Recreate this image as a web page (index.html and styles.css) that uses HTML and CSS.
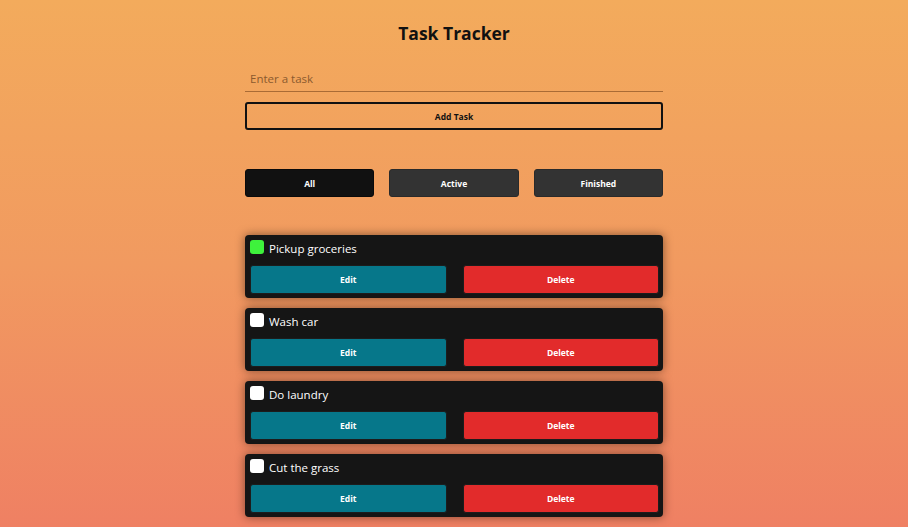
FILE: index.html
```html
<!DOCTYPE html>
<html>
<head>
<meta charset="utf-8">
<link rel="stylesheet" href="styles.css">
</head>
<body>
<main class="app">
  <h1 class="title">Task Tracker</h1>
  <input class="task-input" type="text" placeholder="Enter a task">
  <button class="add-btn">Add Task</button>
  <div class="filters">
    <button class="filter active-filter">All</button>
    <button class="filter">Active</button>
    <button class="filter">Finished</button>
  </div>
  <ul class="tasks">
    <li class="task">
      <div class="task-head"><span class="check done"></span><span class="task-name">Pickup groceries</span></div>
      <div class="task-actions"><button class="edit">Edit</button><button class="delete">Delete</button></div>
    </li>
    <li class="task">
      <div class="task-head"><span class="check"></span><span class="task-name">Wash car</span></div>
      <div class="task-actions"><button class="edit">Edit</button><button class="delete">Delete</button></div>
    </li>
    <li class="task">
      <div class="task-head"><span class="check"></span><span class="task-name">Do laundry</span></div>
      <div class="task-actions"><button class="edit">Edit</button><button class="delete">Delete</button></div>
    </li>
    <li class="task">
      <div class="task-head"><span class="check"></span><span class="task-name">Cut the grass</span></div>
      <div class="task-actions"><button class="edit">Edit</button><button class="delete">Delete</button></div>
    </li>
  </ul>
</main>
</body>
</html>
```
FILE: styles.css
```css
html, body {
  margin: 0;
  height: 100%;
}
body {
  background: linear-gradient(180deg, #f3ab5c 0%, #f19a60 50%, #ef8063 100%);
  font-family: "Open Sans", "Noto Sans", sans-serif;
  overflow: hidden;
}
.app {
  width: 418px;
  margin: 0 auto;
  padding-top: 20px;
  display: flex;
  flex-direction: column;
}
.title {
  margin: 0;
  font-size: 17.5px;
  line-height: 26px;
  font-weight: 700;
  text-align: center;
  color: #111;
}
.task-input {
  margin-top: 19px;
  height: 26px;
  padding: 0 5px;
  border: none;
  border-bottom: 1px solid rgba(110, 60, 20, 0.55);
  background: transparent;
  font-family: inherit;
  font-size: 11.5px;
  outline: none;
}
.task-input::placeholder {
  color: #8b5a2e;
}
.add-btn {
  margin-top: 10px;
  height: 28px;
  border: 2px solid #111;
  border-radius: 3px;
  background: transparent;
  font-family: inherit;
  font-size: 8.5px;
  font-weight: 700;
  color: #111;
}
.filters {
  margin-top: 39px;
  display: flex;
  gap: 15px;
}
.filter {
  flex: 1;
  height: 28px;
  border: 1px solid #2a2a2a;
  border-radius: 3px;
  background: #333;
  color: #fff;
  font-family: inherit;
  font-size: 8.5px;
  font-weight: 700;
}
.filter.active-filter {
  background: #111;
  border-color: #0a0a0a;
}
.tasks {
  list-style: none;
  margin: 38px 0 0;
  padding: 0;
  display: flex;
  flex-direction: column;
  gap: 10px;
}
.task {
  background: #151515;
  border-radius: 4px;
  padding: 5px 4px 4px 5px;
  box-shadow: 0 0 10px rgba(40, 20, 10, 0.55);
  display: flex;
  flex-direction: column;
  gap: 6px;
}
.task-head {
  display: flex;
  align-items: flex-start;
  gap: 5px;
  height: 19px;
}
.check {
  width: 14px;
  height: 14px;
  border-radius: 3px;
  background: #fff;
}
.check.done {
  background: #3ef23c;
}
.task-name {
  color: #fff;
  font-size: 11.5px;
  line-height: 18px;
}
.task-actions {
  display: flex;
  gap: 16px;
}
.task-actions button {
  flex: 1;
  height: 29px;
  border: 1px solid #1c1c1c;
  border-radius: 3px;
  color: #fff;
  font-family: inherit;
  font-size: 8.5px;
  font-weight: 700;
}
.edit {
  background: #06778a;
}
.delete {
  background: #e22b2b;
}
```
